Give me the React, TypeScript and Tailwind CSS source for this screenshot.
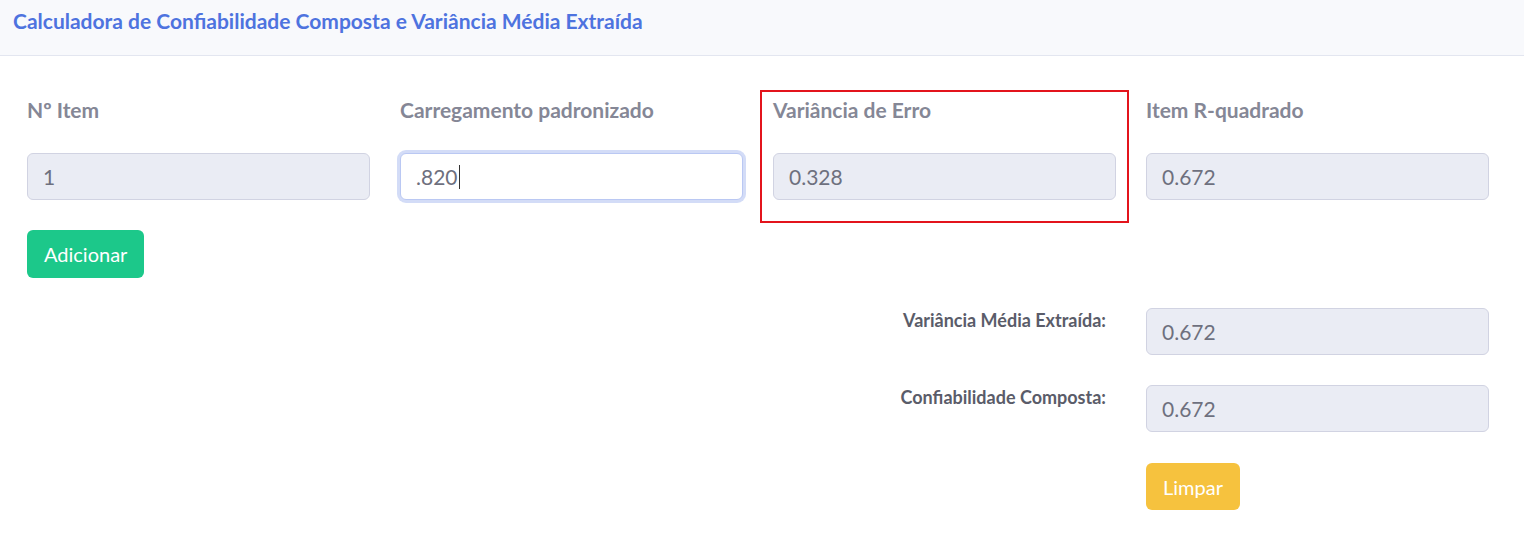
export default function App() {
  const font = { fontFamily: "Lato, 'Noto Sans', sans-serif" };
  const inputCls =
    "h-[47px] w-full rounded-[6px] border border-[#d1d3e2] bg-[#eaecf4] px-[15px] flex items-center text-[21px] text-[#6e707e]";

  const cols = [
    { label: "Nº Item", value: "1" },
    { label: "Carregamento padronizado", value: ".820", focus: true },
    { label: "Variância de Erro", value: "0.328", marked: true },
    { label: "Item R-quadrado", value: "0.672" },
  ];

  const results = [
    { label: "Variância Média Extraída:", value: "0.672" },
    { label: "Confiabilidade Composta:", value: "0.672" },
  ];

  return (
    <div className="min-h-screen w-full bg-white" style={font}>
      <div className="h-[56px] border-b border-[#e3e6f0] bg-[#f8f9fc] px-[13px] pt-[7px]">
        <h6 className="text-[21px] font-bold leading-[28px] text-[#4e73df]">
          Calculadora de Confiabilidade Composta e Variância Média Extraída
        </h6>
      </div>

      <div className="pl-[12px] pr-[20px]">
        <div className="mt-[34px] grid grid-cols-4">
          {cols.map((c) => (
            <div
              key={c.label}
              className={
                "mx-[2px] border-2 px-[11px] pb-[21px] pt-[4px] " +
                (c.marked ? "border-[#e3141c]" : "border-transparent")
              }
            >
              <label className="block text-[21px] font-bold leading-[28px] text-[#858796]">
                {c.label}
              </label>
              {c.focus ? (
                <div className="mt-[29px] flex h-[47px] w-full items-center rounded-[6px] border border-[#bac8f3] bg-white px-[15px] text-[21px] text-[#6e707e] shadow-[0_0_0_3px_rgba(78,115,223,0.25)]">
                  {c.value}
                  <span className="ml-[1px] inline-block h-[24px] w-px bg-[#333]" />
                </div>
              ) : (
                <div className={"mt-[29px] " + inputCls}>{c.value}</div>
              )}
            </div>
          ))}
        </div>

        <div className="px-[15px] pt-[7px]">
          <button className="h-[48px] rounded-[6px] bg-[#1cc88a] px-[17px] text-[20px] text-white">
            Adicionar
          </button>
        </div>

        <div className="mt-[30px] flex flex-col gap-[30px]">
          {results.map((r) => (
            <div key={r.label} className="grid grid-cols-4">
              <div className="col-span-3 pr-[25px] text-right text-[18px] font-bold leading-[24px] text-[#5a5c69]">
                {r.label}
              </div>
              <div className="px-[15px]">
                <div className={inputCls}>{r.value}</div>
              </div>
            </div>
          ))}
          <div className="mt-[1px] grid grid-cols-4">
            <div className="col-span-3" />
            <div className="px-[15px]">
              <button className="h-[47px] rounded-[6px] bg-[#f6c23e] px-[17px] text-[20px] text-white">
                Limpar
              </button>
            </div>
          </div>
        </div>
      </div>
    </div>
  );
}
